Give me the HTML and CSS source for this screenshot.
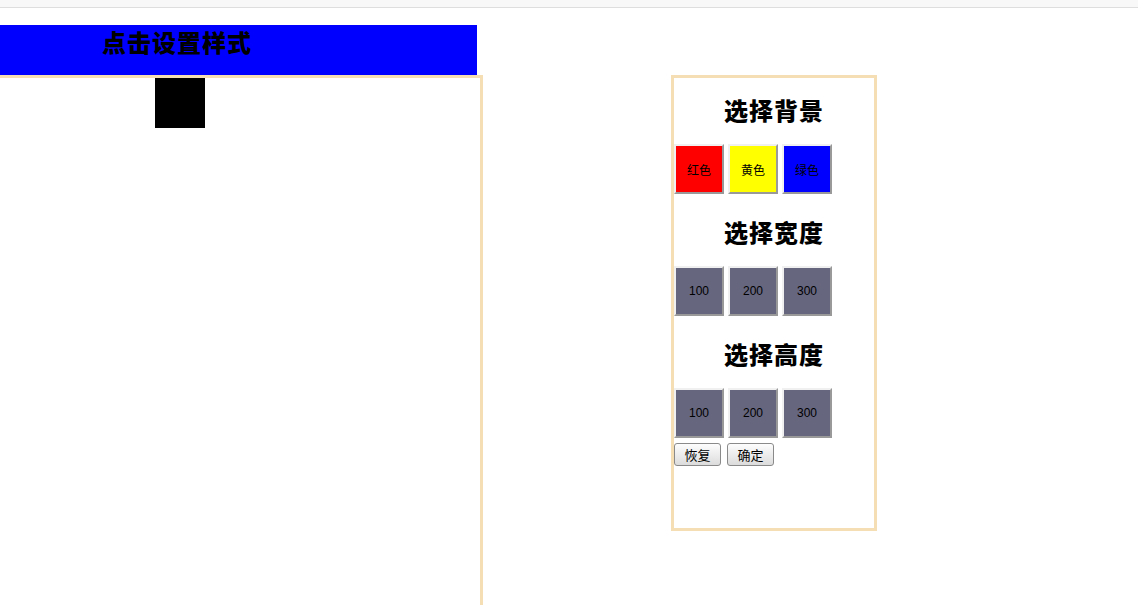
FILE: index.html
```html
<!DOCTYPE html>
<html lang="zh">
<head>
<meta charset="utf-8">
<title>点击设置样式</title>
<link rel="stylesheet" href="styles.css">
</head>
<body>
<div class="topbar"></div>
<div class="main">
  <div class="left">
    <div class="title-bar"><h1 class="title">点击设置样式</h1></div>
    <div class="stage"><div class="square"></div></div>
  </div>
  <div class="panel">
    <h2 class="heading first">选择背景</h2>
    <div class="row">
      <button class="swatch red">红色</button>
      <button class="swatch yellow">黄色</button>
      <button class="swatch blue">绿色</button>
    </div>
    <h2 class="heading">选择宽度</h2>
    <div class="row">
      <button class="swatch gray">100</button>
      <button class="swatch gray">200</button>
      <button class="swatch gray">300</button>
    </div>
    <h2 class="heading">选择高度</h2>
    <div class="row">
      <button class="swatch gray">100</button>
      <button class="swatch gray">200</button>
      <button class="swatch gray">300</button>
    </div>
    <div class="actions">
      <button class="action">恢复</button>
      <button class="action">确定</button>
    </div>
  </div>
</div>
</body>
</html>
```

FILE: styles.css
```css
html, body {
  margin: 0;
  padding: 0;
  background: #fff;
  overflow: hidden;
  font-family: "Liberation Sans", "Noto Sans CJK SC", sans-serif;
}

.topbar {
  height: 7px;
  background: #f8f8f8;
  border-bottom: 1px solid #dedede;
}

.main {
  display: flex;
  align-items: flex-start;
  margin-top: 17px;
}

.left {
  width: 483px;
  flex: none;
}

.title-bar {
  width: 477px;
  height: 50px;
  background: #0000ff;
  box-sizing: border-box;
  padding-top: 3px;
}

.title {
  margin: 0 0 0 102px;
  font-family: "Noto Sans CJK SC", sans-serif;
  font-size: 24px;
  line-height: 28px;
  font-weight: 900;
  letter-spacing: 1px;
  color: #000;
}

.stage {
  width: 480px;
  height: 540px;
  border-top: 3px solid #f5deb3;
  border-right: 3px solid #f5deb3;
}

.square {
  width: 50px;
  height: 50px;
  background: #000;
  margin-left: 155px;
}

.panel {
  margin-top: 50px;
  margin-left: 188px;
  width: 200px;
  height: 450px;
  border: 3px solid #f5deb3;
  flex: none;
}

.heading {
  margin: 24px 0 20px;
  height: 28px;
  font-family: "Noto Sans CJK SC", sans-serif;
  font-size: 24px;
  line-height: 28px;
  font-weight: 900;
  letter-spacing: 1px;
  text-align: center;
  color: #000;
}

.heading.first {
  margin-top: 18px;
}

.row {
  display: flex;
  gap: 4px;
}

.swatch {
  width: 50px;
  height: 50px;
  box-sizing: border-box;
  margin: 0;
  padding: 0;
  border: 2px solid;
  border-color: #f0f0f0 #999 #999 #f0f0f0;
  font-family: "Liberation Sans", "Noto Sans CJK SC", sans-serif;
  font-size: 12px;
  color: #000;
}

.red { background: #ff0000; }
.yellow { background: #ffff00; }
.blue { background: #0000ff; }
.gray { background: #66667f; }

.actions {
  display: flex;
  gap: 6px;
  margin-top: 5px;
}

.action {
  width: 47px;
  height: 23px;
  box-sizing: border-box;
  margin: 0;
  padding: 0;
  border: 1px solid #8a8a8a;
  border-radius: 3px;
  background: linear-gradient(#fdfdfd, #dcdcdc);
  font-family: "Noto Sans CJK SC", sans-serif;
  font-size: 13px;
  line-height: 21px;
  color: #000;
}
```
